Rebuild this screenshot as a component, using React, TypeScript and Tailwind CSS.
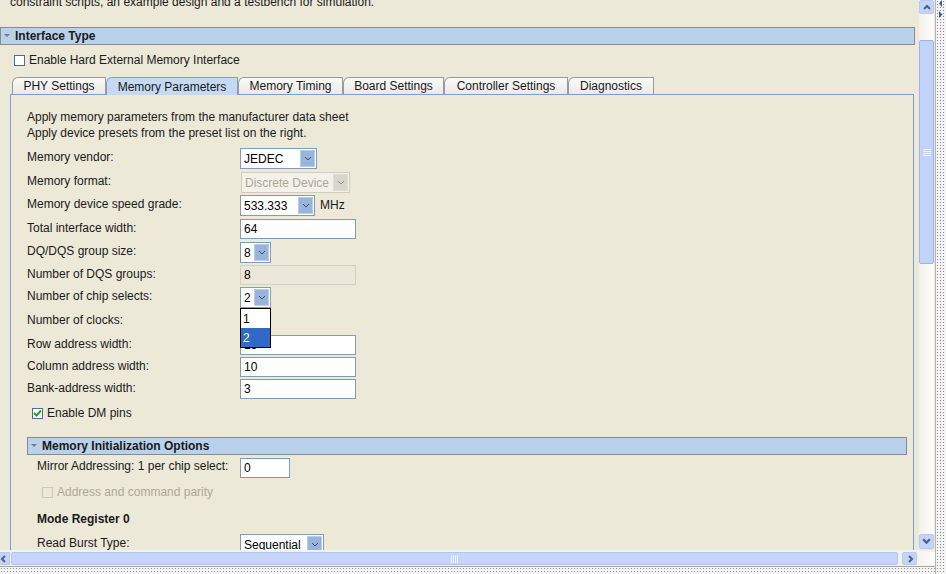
import type { ReactNode } from "react";
import clsx from "clsx";

const tabs = [
  { name: "PHY Settings", w: "w-[94px]" },
  { name: "Memory Parameters", w: "w-[132px]", active: true },
  { name: "Memory Timing", w: "w-[105px]" },
  { name: "Board Settings", w: "w-[101px]" },
  { name: "Controller Settings", w: "w-[124px]" },
  { name: "Diagnostics", w: "w-[86px]" },
];

function Chevron({ dir = "down", color = "#4D6185", size = 8 }: { dir?: "up" | "down" | "left" | "right"; color?: string; size?: number }) {
  const paths = {
    down: "M1 2 L4 5 L7 2",
    up: "M1 6 L4 3 L7 6",
    left: "M5 1 L2 4 L5 7",
    right: "M3 1 L6 4 L3 7",
  };
  return (
    <svg width={size} height={size} viewBox="0 0 8 8">
      <path d={paths[dir]} fill="none" stroke={color} strokeWidth={dir === "down" && size === 8 ? 1 : 2} />
    </svg>
  );
}

function Combo({ value, className, disabled }: { value: string; className: string; disabled?: boolean }) {
  return (
    <div
      className={clsx(
        "flex h-[21px] border",
        disabled ? "border-[#D0CDBF] bg-[#F3F1E8] text-[#ACA899]" : "border-[#7F9DB9] bg-white text-black",
        className
      )}
    >
      <span className="flex-1 overflow-hidden whitespace-nowrap pl-[3px] leading-[20px]">{value}</span>
      <span
        className={clsx(
          "m-[1px] flex w-[15px] items-center justify-center border",
          disabled ? "border-[#E0DED4] bg-[#D8D5CA]" : "border-[#B9CDEB] bg-[#98B4DA]"
        )}
      >
        <Chevron color={disabled ? "#8F8C80" : "#3E4F6E"} />
      </span>
    </div>
  );
}

function Field({ value, className, disabled }: { value: string; className: string; disabled?: boolean }) {
  return (
    <div
      className={clsx(
        "h-[20px] border pl-[3px] leading-[19px]",
        disabled ? "border-[#D4D0C4] bg-[#EBE8DA]" : "border-[#7F9DB9] bg-white",
        className
      )}
    >
      {value}
    </div>
  );
}

function Check({ checked, disabled }: { checked?: boolean; disabled?: boolean }) {
  return (
    <span
      className={clsx(
        "flex h-[11px] w-[11px] items-center justify-center border",
        disabled ? "border-[#CAC8BB] bg-[#ECE9D8]" : "border-[#4B6C9C] bg-white"
      )}
    >
      {checked && (
        <svg width="9" height="9" viewBox="0 0 9 9">
          <path d="M1 4 L3.5 6.5 L8 1.5" fill="none" stroke="#21A121" strokeWidth="2" />
        </svg>
      )}
    </span>
  );
}

function SectionBar({ title, className }: { title: string; className: string }) {
  return (
    <div className={clsx("flex h-[18px] items-center border border-[#8A8A8A] bg-[#B9D1EA]", className)}>
      <svg width="12" height="8" viewBox="0 0 12 8" className="ml-[1px] shrink-0">
        <path d="M2 2 L8 2 L5 5 Z" fill="#7A7A7A" />
      </svg>
      <span className="ml-[1px] font-bold text-[#1a1a1a]">{title}</span>
    </div>
  );
}

function Row({ label, h, children }: { label: string; h: string; children: ReactNode }) {
  return (
    <div className={clsx("flex items-start", h)}>
      <span className="w-[213px] pt-[2px] text-[#1a1a1a]">{label}</span>
      {children}
    </div>
  );
}

function VScroll() {
  return (
    <div className="flex h-[549px] w-[15px] flex-col bg-gradient-to-r from-[#F3F1EC] to-[#FEFEFB]">
      <div className="flex h-[14px] items-center justify-center rounded-[2px] border border-[#B7C8F2] bg-[#C4D4F8]">
        <Chevron dir="up" />
      </div>
      <div className="h-[26px]" />
      <div className="flex h-[224px] items-center justify-center rounded-[2px] border border-[#9FB4E4] bg-[#C1D3FB]">
        <svg width="8" height="9" viewBox="0 0 8 9">
          <path d="M0 1.5 H8 M0 3.5 H8 M0 5.5 H8 M0 7.5 H8" stroke="#EEF3FF" strokeWidth="1" />
        </svg>
      </div>
      <div className="flex-1" />
      <div className="flex h-[15px] items-center justify-center rounded-[2px] border border-[#B7C8F2] bg-[#C4D4F8]">
        <Chevron dir="down" size={9} />
      </div>
    </div>
  );
}

function HScroll() {
  return (
    <div className="flex h-[16px] items-stretch bg-[#F3F1EC] pt-[2px] pb-[1px]">
      <div className="flex w-[10px] items-center justify-start border border-l-0 border-[#B7C8F2] bg-[#C4D4F8]">
        <Chevron dir="left" />
      </div>
      <div className="ml-[1px] flex w-[887px] items-center justify-center rounded-[2px] border border-[#B1C5F2] bg-[#C6D5FA]">
        <svg width="9" height="8" viewBox="0 0 9 8">
          <path d="M1.5 0 V8 M3.5 0 V8 M5.5 0 V8 M7.5 0 V8" stroke="#EEF3FF" strokeWidth="1" />
        </svg>
      </div>
      <div className="w-[4px]" />
      <div className="flex w-[15px] items-center justify-center rounded-[2px] border border-[#B7C8F2] bg-[#C4D4F8]">
        <Chevron dir="right" />
      </div>
      <div className="flex-1 bg-gradient-to-r from-[#F3F1EC] to-[#FEFEFB]" />
    </div>
  );
}

export default function App() {
  return (
    <div className="flex h-[574px] w-[946px] overflow-hidden bg-[#ECE9D8] text-[12px] leading-[14px] [font-family:'Liberation_Sans',Arial,sans-serif]">
      <div className="flex w-[935px] flex-col">
        <div className="flex h-[550px]">
          <div className="h-[550px] w-[917px] overflow-hidden">
            <p className="-mt-[5px] pl-[10px] text-[#1a1a1a]">
              constraint scripts, an example design and a testbench for simulation.
            </p>
            <SectionBar title="Interface Type" className="mt-[18px] w-[915px]" />
            <div className="mt-[7px] flex h-[16px] items-center pl-[14px]">
              <Check />
              <span className="ml-[4px] text-[#1a1a1a]">Enable Hard External Memory Interface</span>
            </div>

            <div className="mt-[9px] ml-[12px] flex h-[17px] items-end">
              {tabs.map((t) => (
                <div
                  key={t.name}
                  className={clsx(
                    "flex items-center justify-center rounded-tl-[6px] border border-b-0 whitespace-nowrap text-[#1a1a1a]",
                    t.w,
                    t.active
                      ? "relative z-10 -mb-px h-[18px] border-[#7F9ED0] bg-[#C6D9F0]"
                      : "h-[17px] border-[#9A9A9A] bg-gradient-to-b from-[#FAFAF8] to-[#EAEAE6]"
                  )}
                >
                  {t.name}
                </div>
              ))}
            </div>

            <div className="ml-[10px] h-[460px] w-[904px] border border-b-0 border-[#7F9ED0] pt-[15px] pl-[16px]">
              <p className="text-[#1a1a1a]">Apply memory parameters from the manufacturer data sheet</p>
              <p className="mt-[2px] text-[#1a1a1a]">Apply device presets from the preset list on the right.</p>

              <div className="mt-[8px]">
                <Row label="Memory vendor:" h="h-[24px]">
                  <Combo value="JEDEC" className="w-[77px]" />
                </Row>
                <Row label="Memory format:" h="h-[23px]">
                  <Combo value="Discrete Device" className="ml-[1px] w-[109px]" disabled />
                </Row>
                <Row label="Memory device speed grade:" h="h-[24px]">
                  <Combo value="533.333" className="w-[75px]" />
                  <span className="ml-[5px] pt-[3px] text-[#1a1a1a]">MHz</span>
                </Row>
                <Row label="Total interface width:" h="h-[23px]">
                  <Field value="64" className="w-[116px]" />
                </Row>
                <Row label="DQ/DQS group size:" h="h-[23px]">
                  <Combo value="8" className="w-[31px]" />
                </Row>
                <Row label="Number of DQS groups:" h="h-[22px]">
                  <Field value="8" className="w-[116px]" disabled />
                </Row>
                <Row label="Number of chip selects:" h="h-[24px]">
                  <div className="relative z-20">
                    <Combo value="2" className="w-[31px]" />
                    <div className="absolute top-[21px] left-0 w-[31px] border border-black bg-white">
                      <div className="h-[19px] pl-[2px] leading-[20px] text-black">1</div>
                      <div className="h-[19px] bg-[#316AC5] pl-[2px] leading-[20px] text-white">2</div>
                    </div>
                  </div>
                </Row>
                <Row label="Number of clocks:" h="h-[24px]">
                  <Combo value="" className="w-[31px]" />
                </Row>
                <Row label="Row address width:" h="h-[22px]">
                  <Field value="15" className="w-[116px]" />
                </Row>
                <Row label="Column address width:" h="h-[22px]">
                  <Field value="10" className="w-[116px]" />
                </Row>
                <Row label="Bank-address width:" h="h-[22px]">
                  <Field value="3" className="w-[116px]" />
                </Row>
              </div>

              <div className="mt-[4px] flex h-[16px] items-center pl-[5px]">
                <Check checked />
                <span className="ml-[4px] text-[#1a1a1a]">Enable DM pins</span>
              </div>

              <SectionBar title="Memory Initialization Options" className="mt-[16px] w-[880px]" />

              <div className="mt-[2px] flex h-[21px] items-start">
                <span className="w-[213px] pt-[2px] pl-[10px] text-[#1a1a1a]">Mirror Addressing: 1 per chip select:</span>
                <Field value="0" className="mt-[1px] w-[50px]" />
              </div>

              <div className="mt-[6px] flex h-[16px] items-center pl-[15px]">
                <Check disabled />
                <span className="ml-[4px] text-[#ACA899]">Address and command parity</span>
              </div>

              <p className="mt-[12px] pl-[10px] font-bold text-[#1a1a1a]">Mode Register 0</p>

              <div className="mt-[8px] flex items-start">
                <span className="w-[213px] pt-[2px] pl-[10px] text-[#1a1a1a]">Read Burst Type:</span>
                <Combo value="Sequential" className="w-[84px]" />
              </div>
            </div>
          </div>
          <div className="ml-[2px]">
            <VScroll />
          </div>
        </div>
        <HScroll />
        <div className="h-[1px] bg-[#A5A5A5]" />
        <div className="flex-1 bg-[#F4F4F4] bg-[radial-gradient(circle,#8C8C8C_0.7px,transparent_0.9px)] bg-[length:3px_3px]" />
      </div>
      <div className="relative w-[11px] border-l border-[#B5B5B5] bg-[#F4F4F4] bg-[radial-gradient(circle,#8C8C8C_0.7px,transparent_0.9px)] bg-[length:3px_3px]">
        <svg width="8" height="22" viewBox="0 0 8 22" className="absolute top-0 left-[2px]">
          <path d="M4 0 L1 3.5 L4 7 Z" fill="#3A5FA8" />
          <path d="M1 11 L4.5 14.5 L1 18 Z" fill="#3A5FA8" />
        </svg>
      </div>
    </div>
  );
}
